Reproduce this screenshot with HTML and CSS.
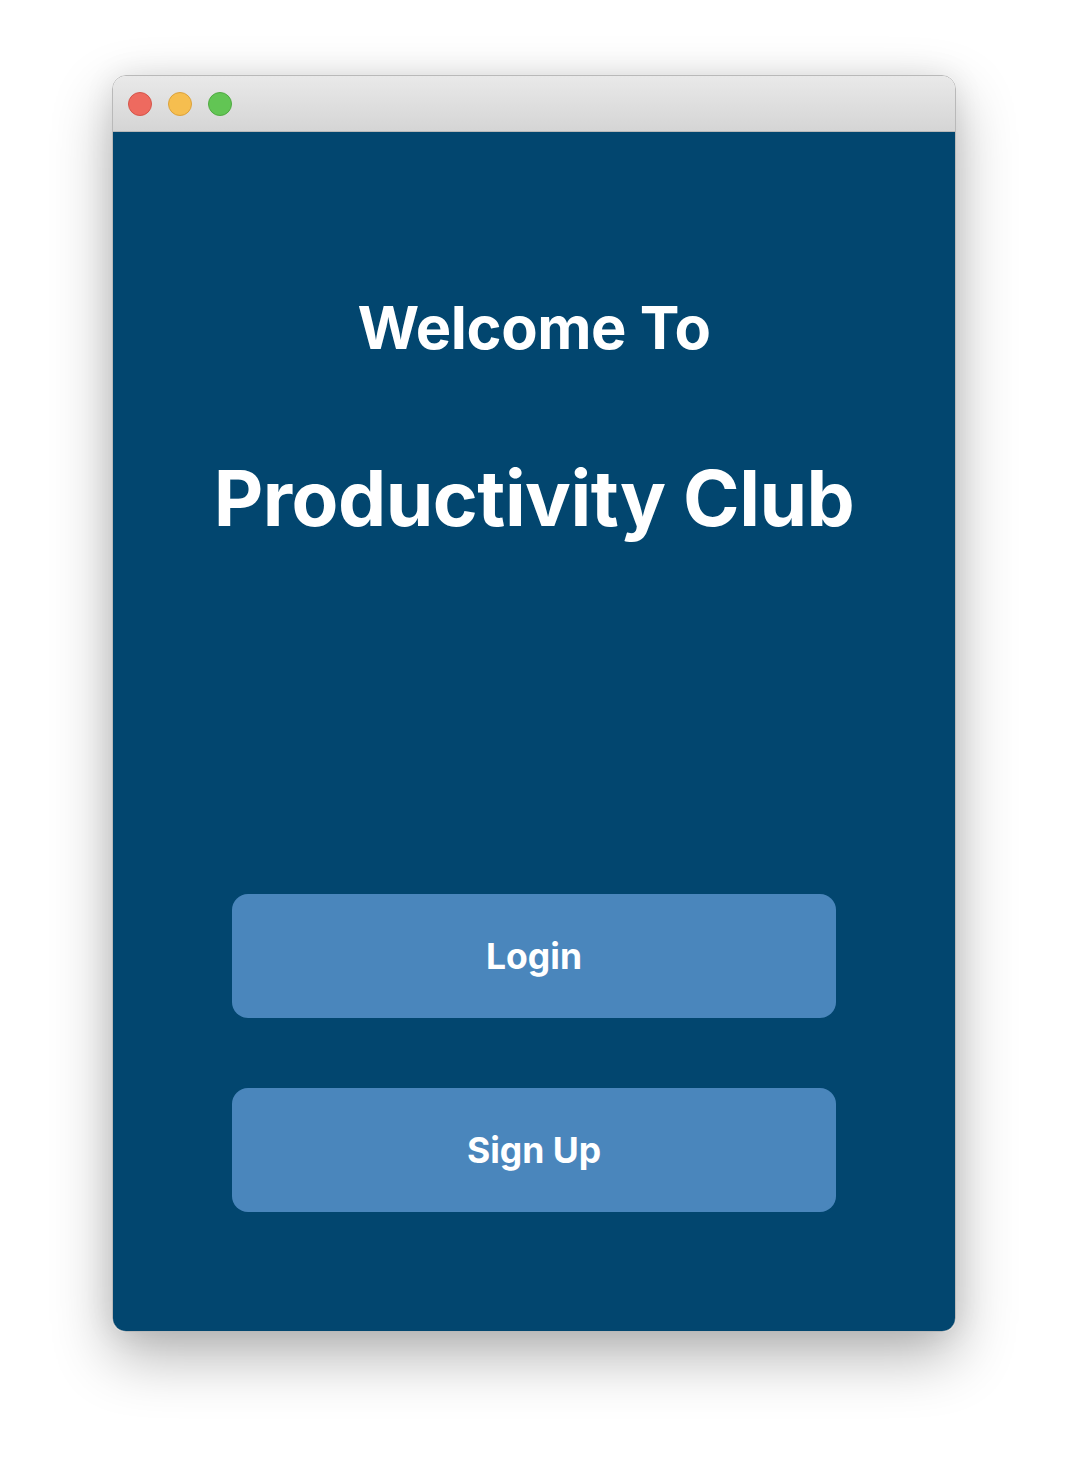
FILE: index.html
```html
<!DOCTYPE html>
<html>
<head>
<meta charset="utf-8">
<link rel="stylesheet" href="styles.css">
</head>
<body>
<div class="window">
  <div class="titlebar">
    <span class="light red"></span>
    <span class="light yellow"></span>
    <span class="light green"></span>
  </div>
  <div class="content">
    <h2 class="welcome">Welcome To</h2>
    <h1 class="title">Productivity Club</h1>
    <div class="buttons">
      <button class="btn">Login</button>
      <button class="btn">Sign Up</button>
    </div>
  </div>
</div>
</body>
</html>
```
FILE: styles.css
```css
html, body {
  margin: 0;
  padding: 0;
  background: #ffffff;
}
body {
  width: 1068px;
  height: 1480px;
  padding-top: 75px;
  padding-left: 112px;
  box-sizing: border-box;
  font-family: Inter, "Liberation Sans", sans-serif;
}
.window {
  width: 844px;
  height: 1257px;
  border-radius: 14px;
  overflow: hidden;
  box-sizing: border-box;
  border: 1px solid #b9b9b9;
  box-shadow: 0 24px 60px rgba(0,0,0,0.30), 0 0 30px rgba(0,0,0,0.08);
  display: flex;
  flex-direction: column;
}
.titlebar {
  height: 55px;
  flex: none;
  background: linear-gradient(#e9e9e9, #d5d5d5);
  border-bottom: 1px solid #b8b8b8;
  display: flex;
  align-items: center;
  padding-left: 15px;
  gap: 16px;
  box-sizing: content-box;
}
.light {
  width: 24px;
  height: 24px;
  border-radius: 50%;
  box-sizing: border-box;
}
.red { background: #ee6a5f; border: 1px solid #d5554a; }
.yellow { background: #f6be4f; border: 1px solid #dca23b; }
.green { background: #62c554; border: 1px solid #50aa42; }
.content {
  flex: 1;
  background: #02466f;
  display: flex;
  flex-direction: column;
  align-items: center;
  padding-top: 163px;
  color: #ffffff;
}
.welcome {
  margin: 0;
  font-size: 59.5px;
  font-weight: 700;
  line-height: 64px;
  letter-spacing: -0.4px;
}
.title {
  margin: 100px 0 0 0;
  font-size: 76.5px;
  font-weight: 700;
  line-height: 78px;
  letter-spacing: -0.5px;
}
.buttons {
  margin-top: 357px;
  display: flex;
  flex-direction: column;
  gap: 70px;
}
.btn {
  width: 604px;
  height: 124px;
  border: none;
  border-radius: 16px;
  background: #4a86bc;
  color: #ffffff;
  font-family: Inter, "Liberation Sans", sans-serif;
  font-size: 35.5px;
  font-weight: 700;
  letter-spacing: 0;
  padding: 0;
}
```
